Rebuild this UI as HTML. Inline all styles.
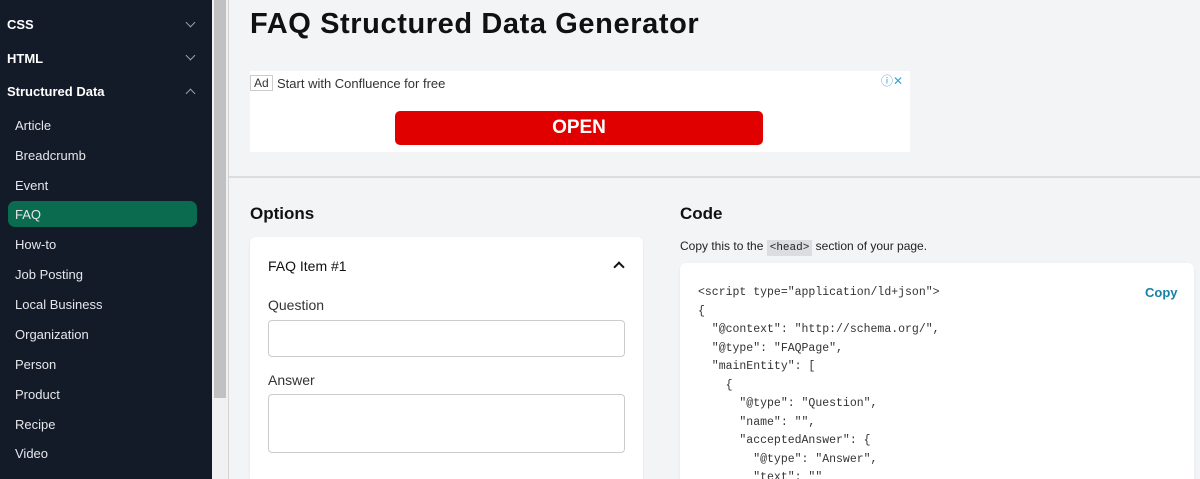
<!DOCTYPE html>
<html style="overflow:hidden;height:479px"><head><style>
*{box-sizing:border-box;margin:0;padding:0}
body{width:1200px;height:479px;overflow:hidden;background:#f3f4f6;font-family:"Liberation Sans",sans-serif;position:relative}
.sb{position:absolute;left:0;top:0;width:212px;height:479px;background:#131a28;color:#fff}
.sb .h{position:absolute;left:7px;font-weight:bold;font-size:13px}
.sb .c{position:absolute;left:187px;width:7px;height:7px;border-right:1.5px solid #9aa0aa;border-bottom:1.5px solid #9aa0aa}
.sb .i{position:absolute;left:15px;font-size:13px;color:#e5e7eb}
.scroll{position:absolute;left:212px;top:0;width:16px;height:479px;background:#f1f1f1}
.thumb{position:absolute;left:214px;top:0;width:12px;height:398px;background:#c1c1c1}
.t{position:absolute;color:#111;font-weight:bold}
.mono{font-family:"Liberation Mono",monospace}
</style></head><body>
<div class="sb">
<div class="h" style="top:17px">CSS</div><div class="c" style="top:19px;transform:rotate(45deg)"></div>
<div class="h" style="top:51px">HTML</div><div class="c" style="top:52px;transform:rotate(45deg)"></div>
<div class="h" style="top:84px">Structured Data</div><div class="c" style="top:90px;transform:rotate(225deg)"></div>
<div class="i" style="top:118px">Article</div>
<div class="i" style="top:148px">Breadcrumb</div>
<div class="i" style="top:178px">Event</div>
<div style="position:absolute;left:8px;top:201px;width:189px;height:26px;background:#0b6b4f;border-radius:7px"></div>
<div class="i" style="top:207px">FAQ</div>
<div class="i" style="top:237px">How-to</div>
<div class="i" style="top:267px">Job Posting</div>
<div class="i" style="top:297px">Local Business</div>
<div class="i" style="top:327px">Organization</div>
<div class="i" style="top:357px">Person</div>
<div class="i" style="top:387px">Product</div>
<div class="i" style="top:417px">Recipe</div>
<div class="i" style="top:446px">Video</div>
</div>
<div class="scroll"></div><div class="thumb"></div>
<div style="position:absolute;left:228px;top:0;width:1px;height:479px;background:#d4d4d4"></div>
<div class="t" style="left:250px;top:8px;font-size:29px;letter-spacing:0.6px;white-space:nowrap">FAQ Structured Data Generator</div>
<div style="position:absolute;left:250px;top:71px;width:660px;height:81px;background:#fff"></div>
<div style="position:absolute;left:250px;top:75px;border:1px solid #ccc;font-size:12px;padding:0 3px;color:#333;background:#fff">Ad</div>
<div style="position:absolute;left:277px;top:76px;font-size:13px;color:#333">Start with Confluence for free</div>
<div style="position:absolute;left:881px;top:72px;font-size:12px;color:#3aa0d8">ⓘ✕</div>
<div style="position:absolute;left:395px;top:111px;width:368px;height:34px;background:#e00000;border-radius:5px;color:#fff;font-weight:bold;font-size:19px;text-align:center;line-height:34px">OPEN</div>
<div style="position:absolute;left:229px;top:176px;width:971px;height:2px;background:#dcdcdc"></div>
<div class="t" style="left:250px;top:204px;font-size:17px">Options</div>
<div class="t" style="left:680px;top:204px;font-size:17px">Code</div>
<div style="position:absolute;left:250px;top:237px;width:393px;height:242px;background:#fff;border-radius:6px 6px 0 0;box-shadow:0 1px 2px rgba(0,0,0,.08)"></div>
<div style="position:absolute;left:268px;top:258px;font-size:14px;color:#111">FAQ Item #1</div>
<div style="position:absolute;left:615px;top:263px;width:8px;height:8px;border-left:2px solid #111;border-top:2px solid #111;transform:rotate(45deg)"></div>
<div style="position:absolute;left:268px;top:297px;font-size:14px;color:#333">Question</div>
<div style="position:absolute;left:268px;top:320px;width:357px;height:37px;border:1px solid #ccc;border-radius:4px;background:#fff"></div>
<div style="position:absolute;left:268px;top:372px;font-size:14px;color:#333">Answer</div>
<div style="position:absolute;left:268px;top:394px;width:357px;height:59px;border:1px solid #ccc;border-radius:4px;background:#fff"></div>
<div style="position:absolute;left:680px;top:239px;font-size:12px;color:#222">Copy this to the <span class="mono" style="background:#dcdde0;padding:2px 3px;font-size:11px">&lt;head&gt;</span> section of your page.</div>
<div style="position:absolute;left:680px;top:263px;width:514px;height:216px;background:#fff;border-radius:6px 6px 0 0;box-shadow:0 1px 2px rgba(0,0,0,.08);overflow:hidden">
<div style="position:absolute;left:465px;top:22px;font-size:13px;font-weight:bold;color:#1a7fa5">Copy</div>
<pre class="mono" style="position:absolute;left:18px;top:21px;font-size:11.5px;line-height:18.5px;color:#333">&lt;script type="application/ld+json"&gt;
{
  "@context": "http://schema.org/",
  "@type": "FAQPage",
  "mainEntity": [
    {
      "@type": "Question",
      "name": "",
      "acceptedAnswer": {
        "@type": "Answer",
        "text": ""</pre>
</div>
</body></html>
